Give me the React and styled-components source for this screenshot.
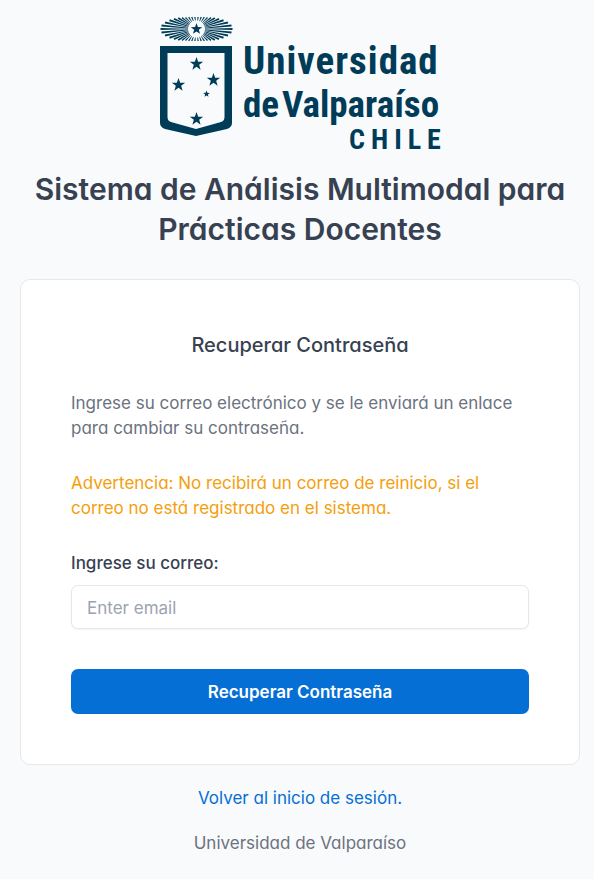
import React from "react";
import styled, { createGlobalStyle } from "styled-components";

const NAVY = "#003c58";

const Global = createGlobalStyle`
  *, *::before, *::after { box-sizing: border-box; }
  body {
    margin: 0;
    background: #f9fafc;
    color: #374151;
    font-family: Inter, sans-serif;
    font-size: 17px;
    line-height: 25px;
    font-feature-settings: "cv03", "cv04", "cv11";
  }
`;

const Page = styled.main`
  display: flex;
  flex-direction: column;
  align-items: center;
  padding: 16px 14px 24px 20px;
`;

const Logo = styled.svg`
  display: block;
  width: 280px;
  height: 136px;
  margin-bottom: 17px;
  fill: ${NAVY};
  overflow: visible;
`;

const LogoText = styled.text`
  font-family: "Roboto Condensed", "Liberation Sans Narrow", Roboto, sans-serif;
  font-weight: 700;
  font-size: ${(p) => p.$size}px;
  letter-spacing: ${(p) => p.$spacing}px;
`;

const Title = styled.h1`
  margin: 0 0 30px;
  font-size: 30px;
  line-height: 40px;
  font-weight: 600;
  text-align: center;
`;

const Card = styled.form`
  display: flex;
  flex-direction: column;
  width: 100%;
  max-width: 560px;
  padding: 50px;
  background: #fff;
  border: 1px solid #e5e7eb;
  border-radius: 10px;
`;

const CardTitle = styled.h2`
  margin: 0 0 31px;
  font-size: 20px;
  line-height: 30px;
  font-weight: 500;
  text-align: center;
`;

const Paragraph = styled.p`
  margin: 0 0 30px;
  color: ${(p) => (p.$warning ? "#f59e0b" : "#6b7280")};
`;

const Label = styled.label`
  margin-bottom: 9px;
  font-weight: 500;
`;

const Input = styled.input`
  width: 100%;
  height: 44px;
  margin-bottom: 40px;
  padding: 1px 15px 0;
  font-family: inherit;
  font-size: 17px;
  color: inherit;
  background: #fff;
  border: 1px solid #e5e7eb;
  border-radius: 7px;
  box-shadow: 0 1px 2px rgba(0, 0, 0, 0.05);
  &::placeholder { color: #9ca3af; opacity: 1; }
`;

const SubmitButton = styled.button`
  height: 45px;
  padding: 0 20px;
  font-family: inherit;
  font-size: 17px;
  font-weight: 600;
  color: #fff;
  background: #056fd5;
  border: 0;
  border-radius: 7px;
  cursor: pointer;
`;

const BackLink = styled.a`
  margin: 21px 0 20px;
  color: #056fd5;
  text-decoration: none;
`;

const Footer = styled.footer`
  color: #6b7280;
`;

const starPoints = (cx, cy, r) =>
  Array.from({ length: 10 }, (_, i) => {
    const a = (i * Math.PI) / 5 - Math.PI / 2;
    const d = i % 2 ? r * 0.4 : r;
    return `${(cx + d * Math.cos(a)).toFixed(2)},${(cy + d * Math.sin(a)).toFixed(2)}`;
  }).join(" ");

// Tips of the sunburst rays in one quadrant, relative to its centre.
const RAY_TIPS = [
  [36, 0], [35, 3.6], [31.5, 6.6], [27, 8.8], [22.5, 10.2], [18.3, 11],
  [14.5, 11.4], [11, 11.6], [7.8, 11.8], [4.7, 12], [1.6, 12],
];

const RAYS = RAY_TIPS.flatMap(([x, y]) =>
  [[1, 1], [-1, 1], [1, -1], [-1, -1]]
    .filter(([, sy]) => y > 0 || sy > 0)
    .map(([sx, sy]) => {
      const length = Math.hypot(x, y);
      const ux = (sx * x) / length;
      const uy = (sy * y) / length;
      const corner = (distance, offset) =>
        `${(36.5 + ux * distance - uy * offset).toFixed(2)},${(13 + uy * distance + ux * offset).toFixed(2)}`;
      const half = length > 20 ? 1 : 0.7;
      return [corner(8.5, -0.3), corner(length, -half), corner(length, half), corner(8.5, 0.3)].join(" ");
    })
);

const STARS = [
  [36.5, 13, 6],
  [36.5, 48, 7],
  [18.5, 69, 7],
  [53.5, 64, 7],
  [46.5, 78, 3.5],
  [36.5, 103, 7],
];

function UniversityLogo() {
  return (
    <Logo viewBox="0 0 280 136" role="img" aria-label="Universidad de Valparaíso Chile">
      {RAYS.map((points) => <polygon key={points} points={points} />)}
      <path
        fillRule="evenodd"
        d="M0 30H72V107Q72 111 67 113L36 120L5 113Q0 111 0 107ZM7.500 37V101Q7.500 105 11 106L36 113L61 106Q64.500 105 64.500 101V37Z"
      />
      {STARS.map(([x, y, r]) => <polygon key={`${x}-${y}`} points={starPoints(x, y, r)} />)}
      <LogoText x="83" y="58" $size={39} $spacing={1}>Universidad</LogoText>
      <LogoText x="83" y="101" $size={37} $spacing={0}>de</LogoText>
      <LogoText x="122" y="101" $size={37} $spacing={0}>Valparaíso</LogoText>
      <LogoText x="189" y="133" $size={28} $spacing={6}>CHILE</LogoText>
    </Logo>
  );
}

export default function App() {
  return (
    <>
      <Global />
      <Page>
        <UniversityLogo />
        <Title>Sistema de Análisis Multimodal para Prácticas Docentes</Title>
        <Card onSubmit={(e) => e.preventDefault()}>
          <CardTitle>Recuperar Contraseña</CardTitle>
          <Paragraph>
            Ingrese su correo electrónico y se le enviará un enlace para cambiar su contraseña.
          </Paragraph>
          <Paragraph $warning>
            Advertencia: No recibirá un correo de reinicio, si el correo no está registrado en el sistema.
          </Paragraph>
          <Label htmlFor="email">Ingrese su correo:</Label>
          <Input id="email" type="email" placeholder="Enter email" />
          <SubmitButton type="submit">Recuperar Contraseña</SubmitButton>
        </Card>
        <BackLink href="#login">Volver al inicio de sesión.</BackLink>
        <Footer>Universidad de Valparaíso</Footer>
      </Page>
    </>
  );
}
